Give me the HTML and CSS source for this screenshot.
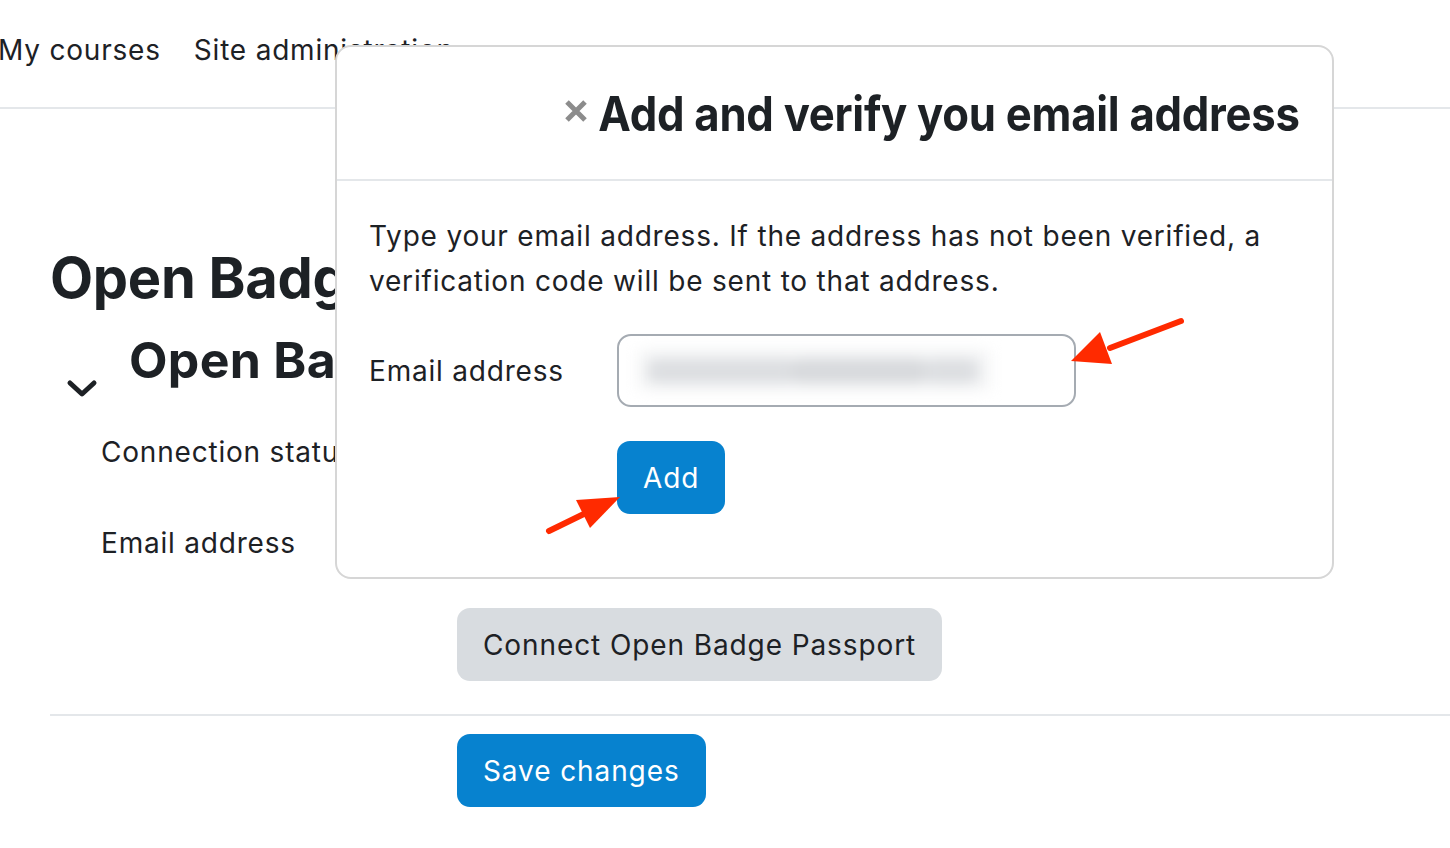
FILE: index.html
```html
<!DOCTYPE html>
<html lang="en">
<head>
<meta charset="utf-8">
<title>Open Badges</title>
<link rel="stylesheet" href="styles.css">
</head>
<body>
<nav class="topnav">
  <a class="navlink">My courses</a>
  <a class="navlink">Site administration</a>
</nav>
<main class="page">
  <h1 class="page-title">Open Badges Passport</h1>
  <section class="fset">
    <div class="fset-head">
      <svg class="chev" width="32" height="22" viewBox="0 0 32 22"><path d="M4 5 L16 16 L28 5" fill="none" stroke="#1d2125" stroke-width="5" stroke-linecap="round" stroke-linejoin="round"/></svg>
      <h2 class="fset-title">Open Badges Passport</h2>
    </div>
    <div class="row row-first">
      <div class="row-label">Connection status</div>
      <div class="row-ctrl">Not connected</div>
    </div>
    <div class="row">
      <div class="row-label">Email address</div>
      <div class="row-ctrl"></div>
    </div>
    <div class="row row-btn">
      <div class="row-label"></div>
      <div class="row-ctrl"><button class="btn btn-secondary">Connect Open Badge Passport</button></div>
    </div>
  </section>
  <div class="actions">
    <div class="row-label"></div>
    <button class="btn btn-primary">Save changes</button>
  </div>
</main>

<div class="modal">
  <div class="modal-head">
    <svg class="close" width="24" height="24" viewBox="0 0 24 24"><path d="M3 3 L21 21 M21 3 L3 21" stroke="#8c8c8c" stroke-width="5" stroke-linecap="butt"/></svg>
    <h3 class="modal-title">Add and verify you email address</h3>
  </div>
  <div class="modal-body">
    <p class="intro">Type your email address. If the address has not been verified, a verification code will be sent to that address.</p>
    <div class="mrow">
      <label class="mlabel">Email address</label>
      <div class="input"><div class="blur"><span class="b1"></span><span class="b2"></span><span class="b3"></span></div></div>
    </div>
    <div class="mrow">
      <div class="mlabel"></div>
      <button class="btn btn-primary btn-add">Add</button>
    </div>
  </div>
</div>

<svg class="arrows" width="1450" height="848" viewBox="0 0 1450 848">
  <line x1="1181" y1="321" x2="1110" y2="348" stroke="#ff2a00" stroke-width="6" stroke-linecap="round"/>
  <polygon points="1071,361 1100,332 1112,364" fill="#ff2a00"/>
  <line x1="549" y1="531" x2="590" y2="511" stroke="#ff2a00" stroke-width="6" stroke-linecap="round"/>
  <polygon points="620,497 576,500 590,528" fill="#ff2a00"/>
</svg>
</body>
</html>
```
FILE: styles.css
```css
* { box-sizing: border-box; }
html, body { margin: 0; padding: 0; }
body {
  width: 1450px;
  height: 848px;
  overflow: hidden;
  background: #fff;
  font-family: Inter, "Noto Sans", sans-serif;
  color: #1d2125;
  position: relative;
}
.topnav {
  display: flex;
  gap: 33px;
  height: 109px;
  padding: 33px 0 0 0;
  margin-left: -2px;
  border-bottom: 2px solid #e4e7ea;
  font-size: 28px;
  letter-spacing: 0.8px;
}
.navlink { color: #1d2125; }
.page { padding-left: 50px; }
.page-title {
  margin: 137px 0 0;
  font-size: 56px;
  font-weight: 700;
  line-height: 64px;
  white-space: nowrap;
  letter-spacing: -0.3px;
}
.fset-head {
  display: flex;
  align-items: flex-end;
  margin-top: 22px;
}
.chev { margin: 0 31px 0 16px; flex: none; position: relative; top: 12px; }
.fset-title {
  margin: 0;
  font-size: 50px;
  font-weight: 700;
  line-height: 56px;
  white-space: nowrap;
  letter-spacing: 0.3px;
}
.row {
  display: flex;
  align-items: center;
  font-size: 28px;
  letter-spacing: 0.8px;
  height: 91px;
}
.row-first { margin-top: 18px; }
.row-btn { height: 73px; margin-top: 20px; }
.row-label { width: 407px; flex: none; padding-left: 51px; }
.btn {
  font-family: inherit;
  font-size: 28px;
  letter-spacing: 0.9px;
  border: 0;
  border-radius: 13px;
  height: 73px;
  padding: 0 26px;
  cursor: pointer;
}
.btn-secondary { background: #d8dce0; color: #1d2125; }
.btn-primary { background: #0782cf; color: #fff; }
.actions {
  display: flex;
  border-top: 2px solid #e4e7ea;
  margin-top: 33px;
  padding-top: 18px;
}
.modal {
  position: absolute;
  left: 335px;
  top: 45px;
  width: 999px;
  height: 534px;
  background: #fff;
  border: 2px solid #d6d6d6;
  border-radius: 16px;
}
.modal-head {
  height: 134px;
  border-bottom: 2px solid #e4e7ea;
  display: flex;
  align-items: center;
  justify-content: flex-end;
  padding: 0 32px 0 0;
}
.close {
  flex: none;
  margin-right: -59px;
  position: relative;
  top: -2px;
}
.modal-title {
  margin: 0;
  font-size: 48px;
  font-weight: 700;
  white-space: nowrap;
  transform: scaleX(0.91);
  transform-origin: right center;
  letter-spacing: -0.3px;
}
.modal-body { padding: 33px 32px 0 32px; }
.intro {
  margin: 0;
  font-size: 28px;
  line-height: 45px;
  letter-spacing: 0.8px;
}
.mrow {
  display: flex;
  align-items: center;
  font-size: 28px;
  letter-spacing: 0.8px;
}
.mrow + .mrow { margin-top: 34px; }
.mlabel { width: 248px; flex: none; }
.intro + .mrow { margin-top: 30px; }
.input {
  width: 459px;
  height: 73px;
  border: 2px solid #a5abb2;
  border-radius: 14px;
  padding: 14px 0 0 20px;
  overflow: hidden;
}
.blur {
  position: relative;
  width: 350px;
  height: 40px;
  background: #f3f4f5;
  filter: blur(7px);
}
.blur span {
  position: absolute;
  top: 9px;
  height: 24px;
  background: #dcdee1;
  border-radius: 12px;
}
.blur .b1 { left: 8px; width: 150px; }
.blur .b2 { left: 150px; width: 140px; background: #d7d9dc; }
.blur .b3 { left: 285px; width: 55px; }
.btn-add { height: 73px; padding: 0 26px; }
.arrows { position: absolute; left: 0; top: 0; pointer-events: none; }
```
